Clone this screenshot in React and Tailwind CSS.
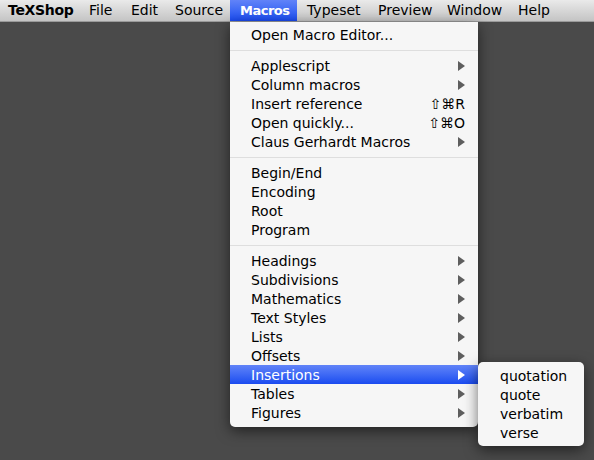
import { Fragment } from 'react'

const font = { fontFamily: '"DejaVu Sans", "Liberation Sans", sans-serif' }

const barItems = [
  { label: 'File', w: 'w-[42px]' },
  { label: 'Edit', w: 'w-[44px]' },
  { label: 'Source', w: 'w-[65px]' },
  { label: 'Macros', w: 'w-[67px]', active: true },
  { label: 'Typeset', w: 'w-[71px]' },
  { label: 'Preview', w: 'w-[69px]' },
  { label: 'Window', w: 'w-[71px]' },
  { label: 'Help', w: 'w-[60px]' },
]

const groups = [
  [{ label: 'Open Macro Editor...' }],
  [
    { label: 'Applescript', sub: true },
    { label: 'Column macros', sub: true },
    { label: 'Insert reference', key: '⇧⌘R' },
    { label: 'Open quickly...', key: '⇧⌘O' },
    { label: 'Claus Gerhardt Macros', sub: true },
  ],
  [{ label: 'Begin/End' }, { label: 'Encoding' }, { label: 'Root' }, { label: 'Program' }],
  [
    { label: 'Headings', sub: true },
    { label: 'Subdivisions', sub: true },
    { label: 'Mathematics', sub: true },
    { label: 'Text Styles', sub: true },
    { label: 'Lists', sub: true },
    { label: 'Offsets', sub: true },
    { label: 'Insertions', sub: true, active: true },
    { label: 'Tables', sub: true },
    { label: 'Figures', sub: true },
  ],
]

function Arrow({ white }) {
  return (
    <svg width="7" height="10" viewBox="0 0 7 10" className="shrink-0">
      <path d="M0 0 L7 5 L0 10 Z" fill={white ? '#ffffff' : '#5e5e5e'} />
    </svg>
  )
}

function Item({ item }) {
  return (
    <div
      className={
        'h-[19px] flex items-center pl-[21px] pr-[13px] ' +
        (item.active ? 'bg-gradient-to-b from-[#6183f8] to-[#1a4af0] text-white' : 'text-black')
      }
    >
      <span className="flex-1 leading-none">{item.label}</span>
      {item.key && <span className="leading-none">{item.key}</span>}
      {item.sub && <Arrow white={item.active} />}
    </div>
  )
}

export default function App() {
  return (
    <div className="relative w-[594px] h-[460px] overflow-hidden bg-[#4a4a4a] text-[14px]" style={font}>
      {/* menu bar */}
      <div className="h-[22px] flex items-stretch bg-gradient-to-b from-[#eaeaea] to-[#c4c4c4] border-b border-[#9a9a9a] pl-[8px]">
        <div className="w-[71px] flex items-center font-bold text-black tracking-[-0.3px]">TeXShop</div>
        {barItems.map((b) => (
          <div
            key={b.label}
            className={
              b.w +
              ' flex items-center pl-[10px] ' +
              (b.active
                ? 'bg-gradient-to-b from-[#6183f8] to-[#1a4af0] text-white font-bold text-[13px] tracking-[-0.5px]'
                : 'text-black')
            }
          >
            {b.label}
          </div>
        ))}
      </div>

      {/* Macros menu */}
      <div className="absolute left-[230px] top-[22px] w-[248px] bg-[#f6f6f6] rounded-b-[5px] pt-[3px] pb-[5px] shadow-[0_4px_14px_rgba(0,0,0,0.55)]">
        {groups.map((g, i) => (
          <Fragment key={i}>
            {i > 0 && (
              <div className="h-[12px] flex items-center">
                <div className="w-full h-px bg-[#dedede]" />
              </div>
            )}
            {g.map((item) => (
              <Item key={item.label} item={item} />
            ))}
          </Fragment>
        ))}
      </div>

      {/* Insertions submenu */}
      <div className="absolute left-[478px] top-[362px] w-[106px] bg-[#f6f6f6] rounded-[5px] py-[4px] shadow-[0_4px_14px_rgba(0,0,0,0.55)]">
        {['quotation', 'quote', 'verbatim', 'verse'].map((s) => (
          <div key={s} className="h-[19px] flex items-center pl-[22px] text-black leading-none">
            {s}
          </div>
        ))}
      </div>
    </div>
  )
}
